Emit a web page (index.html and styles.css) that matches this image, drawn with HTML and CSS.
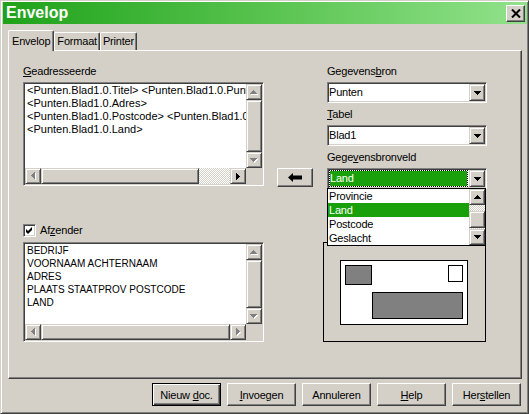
FILE: index.html
```html
<!DOCTYPE html>
<html lang="nl">
<head>
<meta charset="utf-8">
<title>Envelop</title>
<link rel="stylesheet" href="styles.css">
</head>
<body>
<svg class="defs" width="0" height="0" aria-hidden="true">
  <defs>
    <path id="a-up" d="M3 0h1v1h1v1h1v1h1v1H0V3h1V2h1V1h1z"/>
    <path id="a-down" d="M0 0h7v1H6v1H5v1H4v1H3V3H2V2H1V1H0z"/>
    <path id="a-left" d="M3 0h1v7H3V6H2V5H1V4H0V3h1V2h1V1h1z"/>
    <path id="a-right" d="M0 0h1v1h1v1h1v1h1v1H3v1H2v1H1v1H0z"/>
  </defs>
</svg>
<div class="window">
  <div class="titlebar">
    <span class="title">Envelop</span>
    <span class="close"><svg width="10" height="9" viewBox="0 0 10 9"><path d="M1 0.5 L9 8.5 M9 0.5 L1 8.5" stroke="#000" stroke-width="2"/></svg></span>
  </div>
  <div class="body">
    <div class="tabs">
      <div class="tab active">Envelop</div>
      <div class="tab">Formaat</div>
      <div class="tab">Printer</div>
    </div>
    <div class="panel">
      <div class="col-left">
        <div class="label"><u>G</u>eadresseerde</div>
        <div class="listbox addr">
          <div class="lb-text">
            <div>&lt;Punten.Blad1.0.Titel&gt; &lt;Punten.Blad1.0.Punten&gt;</div>
            <div>&lt;Punten.Blad1.0.Adres&gt;</div>
            <div>&lt;Punten.Blad1.0.Postcode&gt; &lt;Punten.Blad1.0.Plaats&gt;</div>
            <div>&lt;Punten.Blad1.0.Land&gt;</div>
          </div>
          <div class="vbar">
            <span class="sbtn"><svg width="8" height="5"><use href="#a-up" x="1" y="1" fill="#fff"/><use href="#a-up" fill="#808080"/></svg></span>
            <span class="thumb"></span>
            <span class="sbtn"><svg width="8" height="5"><use href="#a-down" x="1" y="1" fill="#fff"/><use href="#a-down" fill="#808080"/></svg></span>
          </div>
          <div class="hbar">
            <span class="sbtn"><svg width="5" height="8"><use href="#a-left" x="1" y="1" fill="#fff"/><use href="#a-left" fill="#808080"/></svg></span>
            <span class="thumb hthumb"></span>
            <span class="track"></span>
            <span class="sbtn"><svg width="4" height="7"><use href="#a-right" fill="#000"/></svg></span>
          </div>
          <div class="corner"></div>
        </div>
        <div class="check-row">
          <span class="checkbox"><svg width="7" height="7" viewBox="0 0 7 7"><path d="M0 2 L2 4 L6 0 L6 3 L2 7 L0 5 Z" fill="#000"/></svg></span>
          <span>Af<u>z</u>ender</span>
        </div>
        <div class="listbox sender">
          <div class="lb-text caps">
            <div>BEDRIJF</div>
            <div>VOORNAAM ACHTERNAAM</div>
            <div>ADRES</div>
            <div>PLAATS STAATPROV POSTCODE</div>
            <div>LAND</div>
          </div>
          <div class="vbar">
            <span class="sbtn"><svg width="8" height="5"><use href="#a-up" x="1" y="1" fill="#fff"/><use href="#a-up" fill="#808080"/></svg></span>
            <span class="thumb"></span>
            <span class="sbtn"><svg width="8" height="5"><use href="#a-down" x="1" y="1" fill="#fff"/><use href="#a-down" fill="#808080"/></svg></span>
          </div>
          <div class="hbar">
            <span class="sbtn"><svg width="5" height="8"><use href="#a-left" x="1" y="1" fill="#fff"/><use href="#a-left" fill="#808080"/></svg></span>
            <span class="thumb"></span>
            <span class="sbtn"><svg width="5" height="8"><use href="#a-right" x="1" y="1" fill="#fff"/><use href="#a-right" fill="#808080"/></svg></span>
          </div>
          <div class="corner"></div>
        </div>
      </div>
      <div class="col-mid">
        <span class="btn arrow-btn"><svg width="14" height="9" viewBox="0 0 14 9"><path d="M0 4.5 L5 0 V2.5 H14 V6.5 H5 V9 Z" fill="#000"/></svg></span>
      </div>
      <div class="col-right">
        <div class="label">Gegevens<u>b</u>ron</div>
        <div class="combo"><span class="field">Punten</span><span class="drop"><svg width="7" height="4"><use href="#a-down" fill="#000"/></svg></span></div>
        <div class="label"><u>T</u>abel</div>
        <div class="combo"><span class="field">Blad1</span><span class="drop"><svg width="7" height="4"><use href="#a-down" fill="#000"/></svg></span></div>
        <div class="label">Gege<u>v</u>ensbronveld</div>
        <div class="combo-wrap">
          <div class="combo"><span class="field focus"><span class="sel">Land</span></span><span class="drop"><svg width="7" height="4"><use href="#a-down" fill="#000"/></svg></span></div>
          <div class="droplist">
            <div class="items">
              <div class="item">Provincie</div>
              <div class="item selected">Land</div>
              <div class="item">Postcode</div>
              <div class="item">Geslacht</div>
            </div>
            <div class="vbar">
              <span class="sbtn"><svg width="7" height="4"><use href="#a-up" fill="#000"/></svg></span>
              <span class="track t-top"></span>
              <span class="thumb dthumb"></span>
              <span class="track"></span>
              <span class="sbtn"><svg width="7" height="4"><use href="#a-down" fill="#000"/></svg></span>
            </div>
          </div>
        </div>
        <div class="groupbox">
          <div class="env">
            <div class="env-row"><span class="env-sender"></span><span class="env-stamp"></span></div>
            <div class="env-row env-bottom"><span class="env-addr"></span></div>
          </div>
        </div>
      </div>
    </div>
    <div class="buttons">
      <span class="btn push default"><span>Nieuw <u>d</u>oc.</span></span>
      <span class="btn push"><span><u>I</u>nvoegen</span></span>
      <span class="btn push"><span>Annuleren</span></span>
      <span class="btn push"><span><u>H</u>elp</span></span>
      <span class="btn push"><span>Her<u>s</u>tellen</span></span>
    </div>
  </div>
</div>
</body>
</html>
```
FILE: styles.css
```css
* { box-sizing: border-box; }
html, body { margin: 0; padding: 0; }
body {
  width: 529px;
  height: 414px;
  overflow: hidden;
  background: #d4d0c8;
  font-family: "Liberation Sans", Arial, sans-serif;
  font-size: 11px;
  letter-spacing: -0.2px;
  color: #000;
}
.defs { position: absolute; width: 0; height: 0; overflow: hidden; }
svg { display: block; }

.window {
  width: 529px;
  height: 414px;
  border: 1px solid;
  border-color: #d4d0c8 #404040 #404040 #d4d0c8;
  box-shadow: inset 1px 1px #fff, inset -1px -1px #808080;
  padding: 1px;
  background: #d4d0c8;
}

.titlebar {
  height: 22px;
  margin-left: 1px;
  padding: 0 2px 0 3px;
  background: linear-gradient(90deg, #1fa21a 0%, #58c34f 50%, #92e28b 100%);
  display: flex;
  align-items: center;
  justify-content: space-between;
}
.title {
  color: #fff;
  font-weight: bold;
  font-size: 16px;
  letter-spacing: 0;
  line-height: 22px;
}
.close {
  width: 19px;
  height: 17px;
  background: #d4d0c8;
  border: 1px solid;
  border-color: #fff #404040 #404040 #fff;
  box-shadow: inset -1px -1px #808080;
  display: flex;
  align-items: center;
  justify-content: center;
}

.body { padding: 6px 5px 0 6px; }

.tabs {
  display: flex;
  align-items: flex-end;
  height: 20px;
}
.tab {
  height: 18px;
  padding: 0 2px;
  line-height: 17px;
  border-left: 1px solid #fff;
  border-top: 1px solid #fff;
  border-right: 1px solid #404040;
  box-shadow: inset -1px 0 #808080;
  border-radius: 2px 2px 0 0;
  background: #d4d0c8;
  white-space: nowrap;
}
.tab.active {
  height: 21px;
  padding: 2px 3px 0;
  margin-bottom: -1px;
  position: relative;
  z-index: 1;
}

.panel {
  height: 329px;
  border-left: 1px solid #fff;
  border-top: 1px solid #fff;
  border-right: 1px solid #404040;
  border-bottom: 1px solid #404040;
  box-shadow: inset -1px -1px #808080;
  padding: 14px 0 0 14px;
  display: flex;
  align-items: flex-start;
}

.label { height: 13px; line-height: 13px; margin-bottom: 4px; white-space: nowrap; }

.col-left { width: 241px; display: flex; flex-direction: column; }
.col-mid { padding-top: 103px; margin: 0 14px 0 13px; }
.col-right { width: 160px; display: flex; flex-direction: column; }
.col-right .combo { margin-bottom: 5px; }

/* listboxes */
.listbox {
  border: 1px solid;
  border-color: #808080 #fff #fff #808080;
  box-shadow: inset 1px 1px #404040, inset -1px -1px #d4d0c8;
  padding: 1px;
  background: #fff;
  display: grid;
  grid-template-columns: 1fr 16px;
  grid-template-rows: 1fr 16px;
}
.addr { height: 104px; }
.sender { height: 100px; }
.lb-text {
  padding-left: 2px;
  line-height: 13px;
  letter-spacing: 0;
  white-space: nowrap;
  overflow: hidden;
}
.lb-text.caps { font-size: 10px; }

.vbar { display: flex; flex-direction: column; }
.hbar { display: flex; }
.corner { background: #d4d0c8; }

.sbtn {
  flex: none;
  width: 16px;
  height: 16px;
  background: #d4d0c8;
  border: 1px solid;
  border-color: #d4d0c8 #404040 #404040 #d4d0c8;
  box-shadow: inset 1px 1px #fff, inset -1px -1px #808080;
  display: flex;
  align-items: center;
  justify-content: center;
}
.thumb {
  flex: 1;
  background: #d4d0c8;
  border: 1px solid;
  border-color: #d4d0c8 #404040 #404040 #d4d0c8;
  box-shadow: inset 1px 1px #fff, inset -1px -1px #808080;
}
.hthumb { flex: 0 0 158px; }
.track {
  flex: 1;
  background: repeating-conic-gradient(#fff 0 25%, #d4d0c8 0 50%) 0 0 / 2px 2px;
}

/* checkbox */
.check-row {
  margin-top: 38px;
  height: 13px;
  line-height: 13px;
  display: flex;
  align-items: center;
  gap: 4px;
  margin-bottom: 5px;
}
.checkbox {
  width: 13px;
  height: 13px;
  border: 1px solid;
  border-color: #808080 #fff #fff #808080;
  box-shadow: inset 1px 1px #404040, inset -1px -1px #d4d0c8;
  background: #fff;
  display: flex;
  align-items: center;
  justify-content: center;
}

/* buttons */
.btn {
  background: #d4d0c8;
  border: 1px solid;
  border-color: #fff #404040 #404040 #fff;
  box-shadow: inset -1px -1px #808080;
  display: flex;
  align-items: center;
  justify-content: center;
  white-space: nowrap;
}
.arrow-btn { width: 36px; height: 19px; }
.buttons {
  display: flex;
  justify-content: flex-end;
  gap: 6px;
  margin-top: 4px;
  padding-right: 1px;
}
.push { width: 69px; height: 23px; }
.push.default {
  border-color: #000;
  box-shadow: inset 1px 1px #fff, inset -1px -1px #404040, inset -2px -2px #808080;
}

/* combos */
.combo {
  height: 21px;
  border: 1px solid;
  border-color: #808080 #fff #fff #808080;
  box-shadow: inset 1px 1px #404040, inset -1px -1px #d4d0c8;
  padding: 1px;
  background: #fff;
  display: flex;
}
.field {
  flex: 1;
  line-height: 17px;
  white-space: nowrap;
  overflow: hidden;
}
.field.focus { padding: 0 1px 0 0; background: #fff; }
.sel {
  display: block;
  height: 17px;
  line-height: 15px;
  background: #1aa00b;
  background-clip: padding-box;
  color: #fff;
  border: 1px dotted #000;
}
.drop {
  flex: none;
  width: 16px;
  background: #d4d0c8;
  border: 1px solid;
  border-color: #d4d0c8 #404040 #404040 #d4d0c8;
  box-shadow: inset 1px 1px #fff, inset -1px -1px #808080;
  display: flex;
  align-items: center;
  justify-content: center;
}

.combo-wrap { position: relative; }
.combo-wrap .combo { margin-bottom: 0; }
.droplist {
  position: absolute;
  top: 20px;
  left: 0;
  width: 159px;
  height: 58px;
  border: 1px solid #000;
  background: #fff;
  display: flex;
  z-index: 2;
}
.items { flex: 1; }
.item { height: 14px; line-height: 14px; padding-left: 1px; white-space: nowrap; }
.item.selected { background: #1aa00b; color: #fff; }
.droplist .vbar { width: 16px; }
.t-top { flex: 0 0 6px; }
.dthumb { flex: 0 0 17px; }

/* preview */
.groupbox {
  margin-top: 53px;
  margin-left: -4px;
  width: 163px;
  height: 100px;
  border: 1px solid #000;
  padding: 17px 0 0 16px;
}
.env {
  width: 128px;
  height: 65px;
  border: 1px solid #000;
  background: #fff;
  padding: 4px;
  display: flex;
  flex-direction: column;
}
.env-row { display: flex; justify-content: space-between; align-items: flex-start; }
.env-bottom { justify-content: flex-end; margin-top: 7px; }
.env-sender { width: 27px; height: 20px; background: #808080; border: 1px solid #000; }
.env-stamp { width: 15px; height: 17px; background: #fff; border: 1px solid #000; }
.env-addr { width: 91px; height: 27px; background: #808080; border: 1px solid #000; }
```
